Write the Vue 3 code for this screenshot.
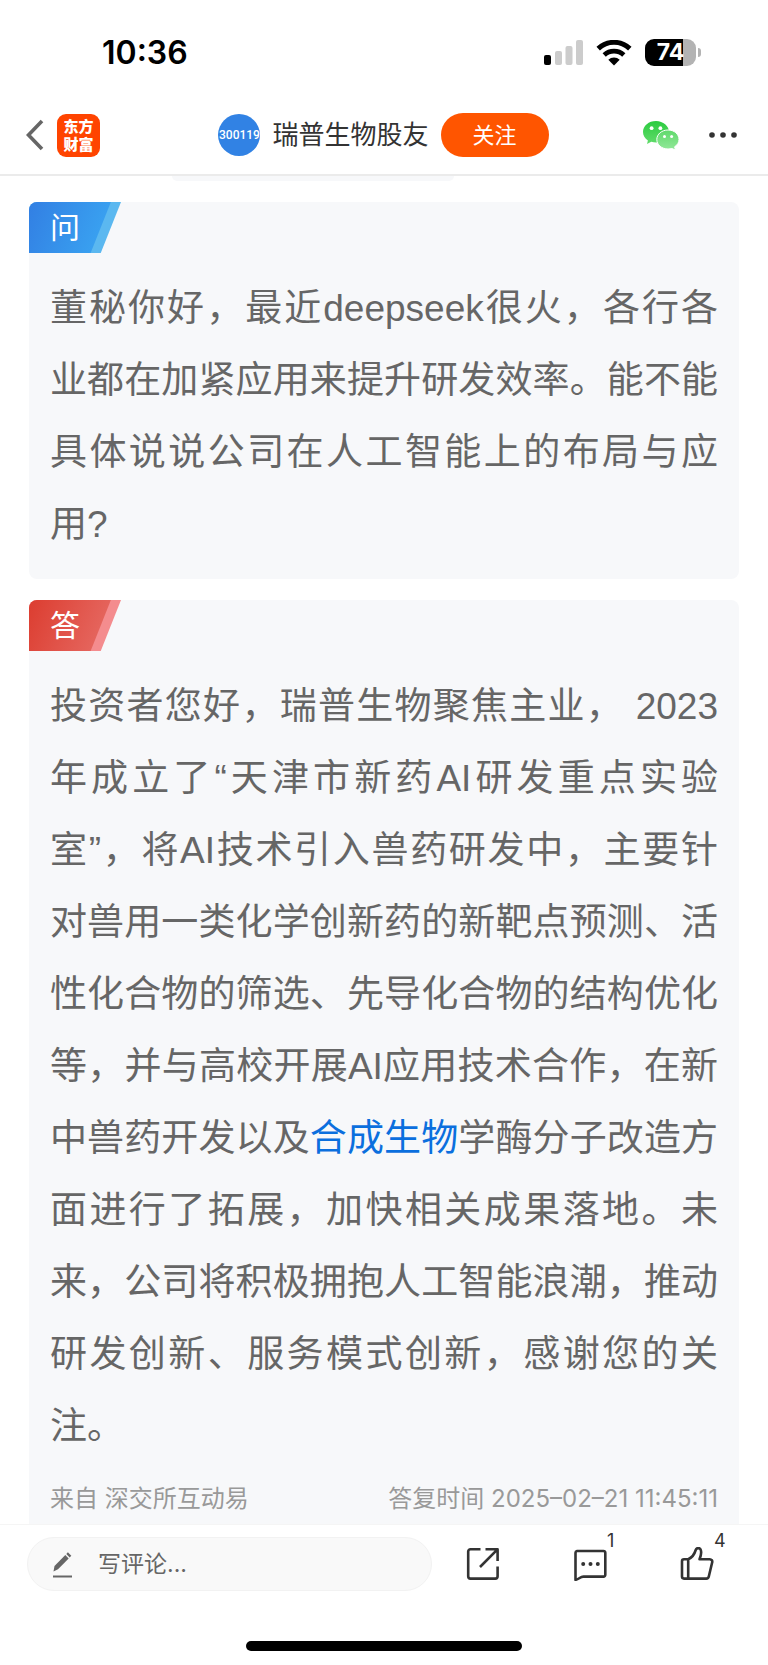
<template>
  <div class="page">
    <div class="status-bar">
      <span class="time">10:36</span>
      <div class="status-icons">
        <svg class="signal" viewBox="0 0 39 26" aria-hidden="true">
          <rect x="0" y="15" width="7" height="10" rx="2" fill="#000" />
          <rect x="11" y="11" width="7" height="14" rx="2" fill="#ccc" />
          <rect x="21.500" y="6" width="7" height="19" rx="2" fill="#ccc" />
          <rect x="32" y="0" width="7" height="25" rx="2" fill="#ccc" />
        </svg>
        <svg class="wifi" viewBox="0 0 36 26" aria-hidden="true">
          <path d="M2.200 8.600a23 23 0 0 1 31.600 0" fill="none" stroke="#000" stroke-width="5" />
          <path d="M8.200 15a14.500 14.500 0 0 1 19.600 0" fill="none" stroke="#000" stroke-width="4.800" />
          <path d="M18 25.500l-5.700-5.700a8.200 8.200 0 0 1 11.400 0z" fill="#000" />
        </svg>
        <div class="battery"><span>74</span></div>
      </div>
    </div>

    <header class="nav">
      <div class="nav-left">
        <button class="icon-btn" aria-label="返回">
          <svg class="back" viewBox="0 0 18 32">
            <path d="M16 2L2.500 16 16 30" fill="none" stroke="#666" stroke-width="3.600" />
          </svg>
        </button>
        <a class="logo" href="#">东方<br />财富</a>
      </div>
      <div class="nav-center">
        <span class="avatar">300119</span>
        <span class="title">瑞普生物股友</span>
        <button class="follow" @click="followed = !followed">{{ followed ? '已关注' : '关注' }}</button>
      </div>
      <div class="nav-right">
        <button class="icon-btn" aria-label="微信分享">
          <svg class="wechat" viewBox="0 0 36 29">
            <defs>
              <linearGradient id="wx1" x1="0" y1="0" x2="0" y2="1">
                <stop offset="0" stop-color="#2bcb3f" />
                <stop offset="1" stop-color="#62dc6c" />
              </linearGradient>
              <linearGradient id="wx2" x1="0" y1="0" x2="0" y2="1">
                <stop offset="0" stop-color="#5fd96b" />
                <stop offset="1" stop-color="#93e89a" />
              </linearGradient>
            </defs>
            <path d="M13 0C5.800 0 0 4.900 0 11c0 3.500 1.900 6.500 4.900 8.500L4 23l4.300-2.200c1.500.5 3.100.7 4.700.7 7.200 0 13-4.500 13-10.500S20.200 0 13 0z" fill="url(#wx1)" />
            <path d="M25 9c-6.200 0-11.200 4.200-11.200 9.500S18.800 28 25 28c1.400 0 2.700-.2 3.900-.5L32.500 29l-.9-3.200c2.700-1.700 4.400-4.300 4.400-7.300C36 13.200 31.200 9 25 9z" fill="url(#wx2)" stroke="#fff" stroke-width="1" />
            <circle cx="8.600" cy="7.200" r="1.900" fill="#fff" />
            <circle cx="17.400" cy="7.200" r="1.900" fill="#fff" />
            <circle cx="21.500" cy="15.600" r="1.500" fill="#fff" />
            <circle cx="28.600" cy="15.600" r="1.500" fill="#fff" />
          </svg>
        </button>
        <button class="icon-btn" aria-label="更多">
          <svg class="more" viewBox="0 0 28 6">
            <circle cx="3" cy="3" r="2.800" fill="#333" />
            <circle cx="14" cy="3" r="2.800" fill="#333" />
            <circle cx="25" cy="3" r="2.800" fill="#333" />
          </svg>
        </button>
      </div>
    </header>

    <main class="content">
      <div class="prev-block"></div>
      <section class="card ask">
        <div class="tag"><span>问</span></div>
        <p class="text">{{ question }}</p>
      </section>
      <section class="card answer">
        <div class="tag"><span>答</span></div>
        <p class="text">{{ answer.before }}<a href="#">{{ answer.link }}</a>{{ answer.after }}</p>
        <div class="meta">
          <span>来自 深交所互动易</span>
          <span>答复时间 2025–02–21 11:45:11</span>
        </div>
      </section>
    </main>

    <footer class="bottom">
      <div class="toolbar">
        <label class="comment-box">
          <svg class="pencil" viewBox="0 0 20 27" aria-hidden="true">
            <path d="M.5 20.500l1-5.500L12.300 4l3.400 3.400L5 18.200z" fill="#666" />
            <path d="M13.300 3l1.600-1.700 3.400 3.400-1.600 1.700z" fill="#666" />
            <path d="M0 25.500h19" stroke="#666" stroke-width="2" />
          </svg>
          <input v-model="comment" type="text" placeholder="写评论..." aria-label="写评论" />
        </label>
        <button class="action" aria-label="分享">
          <svg viewBox="0 0 34 34">
            <path d="M14.500 2.200H4.500a2.300 2.300 0 0 0-2.300 2.300v24.800a2.300 2.300 0 0 0 2.300 2.300h24.800a2.300 2.300 0 0 0 2.300-2.300V19.500" />
            <path d="M19.500 2.200h12.100V14M31 2.800L14 20" />
          </svg>
        </button>
        <button class="action" aria-label="评论">
          <svg viewBox="0 0 34 34">
            <path d="M4 4h26.500a1.800 1.800 0 0 1 1.800 1.800v22a1.800 1.800 0 0 1-1.800 1.800H10.500c-3.500 0-4.800 3-8 3.200V5.800A1.800 1.800 0 0 1 4 4z" />
            <circle class="dot" cx="10.200" cy="17" r="2" />
            <circle class="dot" cx="17.500" cy="17" r="2" />
            <circle class="dot" cx="24.800" cy="17" r="2" />
          </svg>
          <span class="badge">1</span>
        </button>
        <button class="action" aria-label="点赞">
          <svg viewBox="0 0 34 34">
            <path d="M8.200 12.200H4a2 2 0 0 0-2 2v15.400a2 2 0 0 0 2 2h22.300a2.600 2.600 0 0 0 2.500-2.100l3.400-14.200a2.500 2.500 0 0 0-2.400-3.100H19.500c1.600-3.500 2-6.800 1.300-9.200-.7-2.500-4.300-2.600-5.100 0-1 3.500-3.700 7.600-7.500 9.200v19.400" />
          </svg>
          <span class="badge">4</span>
        </button>
      </div>
      <div class="home-indicator"></div>
    </footer>
  </div>
</template>

<script setup>
import { ref } from 'vue'

const followed = ref(false)
const comment = ref('')

const question =
  '董秘你好，最近deepseek很火，各行各业都在加紧应用来提升研发效率。能不能具体说说公司在人工智能上的布局与应用?'

// 正文中的概念词单独作为链接
const answer = {
  before:
    '投资者您好，瑞普生物聚焦主业， 2023年成立了“天津市新药AI研发重点实验室”，将AI技术引入兽药研发中，主要针对兽用一类化学创新药的新靶点预测、活性化合物的筛选、先导化合物的结构优化等，并与高校开展AI应用技术合作，在新中兽药开发以及',
  link: '合成生物',
  after:
    '学酶分子改造方面进行了拓展，加快相关成果落地。未来，公司将积极拥抱人工智能浪潮，推动研发创新、服务模式创新，感谢您的关注。',
}
</script>

<style>
body {
  margin: 0;
  background: #fff;
}
</style>

<style scoped>
.page {
  height: 100vh;
  display: flex;
  flex-direction: column;
  background: #fff;
  color: #333;
  font-family: Inter, "Noto Sans CJK SC", sans-serif;
}
button {
  border: none;
  padding: 0;
  background: none;
  font-family: inherit;
  color: inherit;
  cursor: pointer;
}
a { text-decoration: none; }
svg { display: block; }

/* 状态栏 */
.status-bar {
  height: 96px;
  flex-shrink: 0;
  box-sizing: border-box;
  padding: 9px 67px 0 102px;
  display: flex;
  align-items: center;
  justify-content: space-between;
}
.time {
  font-size: 32px;
  line-height: 36px;
  font-weight: 600;
  color: #000;
}
.status-icons {
  display: flex;
  align-items: center;
  gap: 13px;
}
.signal { width: 39px; height: 26px; }
.wifi { width: 36px; height: 26px; }
.battery {
  position: relative;
  width: 51px;
  height: 27px;
  margin-right: 5px;
  border-radius: 9px;
  background: linear-gradient(90deg, #000 74%, #b3b3b3 74%);
  color: #fff;
  font-size: 23px;
  line-height: 27px;
  font-weight: 700;
  text-align: center;
}
.battery::after {
  content: '';
  position: absolute;
  right: -5px;
  top: 9px;
  width: 3px;
  height: 9px;
  border-radius: 0 4px 4px 0;
  background: #b3b3b3;
}

/* 导航栏 */
.nav {
  height: 80px;
  flex-shrink: 0;
  box-sizing: border-box;
  padding: 0 31px 0 26px;
  display: grid;
  grid-template-columns: 1fr auto 1fr;
  align-items: center;
  border-bottom: 2px solid #ebebeb;
}
.nav-left {
  display: flex;
  align-items: center;
  gap: 13px;
}
.back { width: 18px; height: 32px; }
.logo {
  width: 43px;
  height: 43px;
  box-sizing: border-box;
  padding-top: 4px;
  border-radius: 9px;
  background: #ff4400;
  color: #fff;
  font-size: 15px;
  line-height: 18px;
  font-weight: 900;
  text-align: center;
}
.nav-center {
  padding-left: 4px;
  display: flex;
  align-items: center;
  gap: 12px;
}
.avatar {
  width: 42px;
  height: 42px;
  border-radius: 50%;
  background: #3182e4;
  color: #fff;
  font-family: Roboto, sans-serif;
  font-size: 12px;
  line-height: 42px;
  font-weight: 500;
  text-align: center;
}
.title {
  font-size: 26px;
  line-height: 36px;
  white-space: nowrap;
}
.follow {
  width: 108px;
  height: 44px;
  border-radius: 22px;
  background: #ff5500;
  color: #fff;
  font-size: 22px;
  line-height: 44px;
}
.nav-right {
  display: flex;
  align-items: center;
  justify-content: flex-end;
  gap: 30px;
}
.wechat { width: 36px; height: 29px; }
.more { width: 28px; height: 6px; }

/* 问答内容 */
.content {
  flex: 1;
  min-height: 0;
  overflow: hidden;
  padding: 0 29px;
}
.prev-block {
  width: 282px;
  height: 5px;
  margin: 0 auto 21px 143px;
  border-radius: 0 0 8px 8px;
  background: #f7f8fa;
}
.card {
  margin-bottom: 21px;
  padding-bottom: 18px;
  border-radius: 8px;
  background: #f7f8fa;
  overflow: hidden;
}
.tag {
  position: relative;
  width: 92px;
  height: 51px;
  box-sizing: border-box;
  padding-left: 21px;
  clip-path: polygon(0 0, 100% 0, 78% 100%, 0 100%);
  color: #fff;
  font-size: 30px;
  line-height: 51px;
}
.tag::before {
  content: '';
  position: absolute;
  inset: 0;
  clip-path: polygon(0 0, 89% 0, 67% 100%, 0 100%);
}
.tag span { position: relative; }
.ask .tag { background: #5bb8f0; }
.ask .tag::before { background: linear-gradient(113deg, #327fe3, #3aa5f2 85%); }
.answer .tag { background: #f48c8e; }
.answer .tag::before { background: linear-gradient(113deg, #dc3d30, #e66a63 85%); }
.text {
  margin: 20px 21px 0;
  color: #666;
  font-family: "Liberation Sans", "Noto Sans CJK SC", sans-serif;
  font-size: 37px;
  line-height: 72px;
  text-align: justify;
}
.text a { color: #0b6fde; }
.meta {
  padding: 18px 21px 20px;
  display: flex;
  justify-content: space-between;
  color: #999;
  font-size: 24px;
  line-height: 36px;
}

/* 底部工具栏 */
.bottom {
  flex-shrink: 0;
  border-top: 1px solid #f5f5f5;
  background: #fff;
}
.toolbar {
  padding: 12px 54px 0 27px;
  display: flex;
  align-items: center;
}
.comment-box {
  flex: 1;
  min-width: 0;
  height: 54px;
  box-sizing: border-box;
  margin-right: 34px;
  padding: 0 25px;
  display: flex;
  align-items: center;
  gap: 25px;
  border: 1px solid #f2f2f2;
  border-radius: 27px;
  background: #f9f9f9;
}
.pencil { width: 20px; height: 27px; flex-shrink: 0; }
.comment-box input {
  flex: 1;
  min-width: 0;
  padding: 0;
  border: none;
  outline: none;
  background: none;
  color: #333;
  font-family: inherit;
  font-size: 23px;
  line-height: 36px;
}
.comment-box input::placeholder { color: #666; opacity: 1; }
.action {
  position: relative;
  width: 34px;
  height: 34px;
}
.action + .action { margin-left: 73px; }
.action svg {
  width: 34px;
  height: 34px;
  fill: none;
  stroke: #333;
  stroke-width: 2.6;
  stroke-linejoin: round;
}
.action .dot { fill: #333; stroke: none; }
.badge {
  position: absolute;
  left: 34px;
  top: -18px;
  font-size: 18px;
  line-height: 24px;
  color: #333;
}
.home-indicator {
  width: 276px;
  height: 10px;
  margin: 50px auto 14px;
  border-radius: 5px;
  background: #000;
}
</style>
